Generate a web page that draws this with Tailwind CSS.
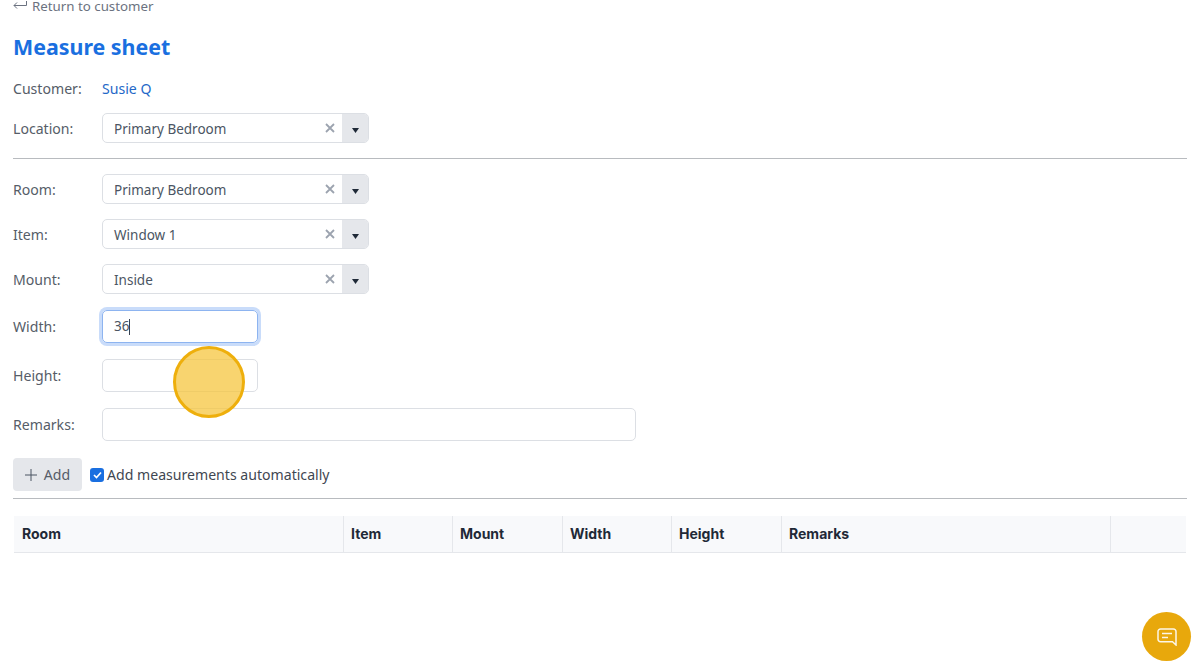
<!DOCTYPE html>
<html>
<head>
<meta charset="utf-8">
<script src="https://cdn.jsdelivr.net/npm/@tailwindcss/browser@4"></script>
</head>
<body class="bg-white overflow-hidden">
<div class="relative w-[1200px] h-[670px] overflow-hidden font-['Noto_Sans',sans-serif] text-[14.1px] text-[#565d68]">
  <div class="px-[13px] flex flex-col">
    <div class="h-[13px] flex items-center gap-[5px] text-[13.3px] text-[#6b7280]">
      <svg class="w-[14px] h-[12px]" viewBox="0 0 14 12" fill="none" stroke="#6b7280" stroke-width="1"><path d="M13.500 0v4.500H1M1 4.500l3-3M1 4.500l3 3"/></svg>
      <span>Return to customer</span>
    </div>
    <h1 class="mt-[18px] h-[32px] leading-[32px] text-[21.4px] font-bold text-[#1a6fe0]">Measure sheet</h1>
    <div class="mt-[14px] h-[24px] flex items-center">
      <span class="w-[89px]">Customer:</span><span class="text-[#2468c8]">Susie Q</span>
    </div>
    <div class="mt-[12px] h-[30px] flex items-center">
      <span class="w-[89px] mt-[2px]">Location:</span>
      <div class="w-[267px] h-[30px] flex rounded-[5px] border border-[#dcdfe4] overflow-hidden">
        <span class="flex-1 pl-[11px] leading-[30px] text-[13.5px] text-[#4b5563]">Primary Bedroom</span>
        <span class="w-[26px] pl-[2px] flex items-center justify-center"><svg class="w-[10px] h-[10px]" viewBox="0 0 10 10" stroke="#9ca3af" stroke-width="1.800"><path d="M1 1l8 8M9 1l-8 8"/></svg></span>
        <span class="w-[26px] bg-[#e5e7eb] flex items-center justify-center pt-[5px]"><svg class="w-[7px] h-[5px]" viewBox="0 0 7 5" fill="#1f2937"><path d="M0 0h7L3.500 5z"/></svg></span>
      </div>
    </div>
    <div class="mt-[15px] h-[1px] bg-[#b8bbbf]"></div>
    <div class="mt-[15px] h-[30px] flex items-center">
      <span class="w-[89px] mt-[2px]">Room:</span>
      <div class="w-[267px] h-[30px] flex rounded-[5px] border border-[#dcdfe4] overflow-hidden">
        <span class="flex-1 pl-[11px] leading-[30px] text-[13.5px] text-[#4b5563]">Primary Bedroom</span>
        <span class="w-[26px] pl-[2px] flex items-center justify-center"><svg class="w-[10px] h-[10px]" viewBox="0 0 10 10" stroke="#9ca3af" stroke-width="1.800"><path d="M1 1l8 8M9 1l-8 8"/></svg></span>
        <span class="w-[26px] bg-[#e5e7eb] flex items-center justify-center pt-[5px]"><svg class="w-[7px] h-[5px]" viewBox="0 0 7 5" fill="#1f2937"><path d="M0 0h7L3.500 5z"/></svg></span>
      </div>
    </div>
    <div class="mt-[15px] h-[30px] flex items-center">
      <span class="w-[89px] mt-[2px]">Item:</span>
      <div class="w-[267px] h-[30px] flex rounded-[5px] border border-[#dcdfe4] overflow-hidden">
        <span class="flex-1 pl-[11px] leading-[30px] text-[13.5px] text-[#4b5563]">Window 1</span>
        <span class="w-[26px] pl-[2px] flex items-center justify-center"><svg class="w-[10px] h-[10px]" viewBox="0 0 10 10" stroke="#9ca3af" stroke-width="1.800"><path d="M1 1l8 8M9 1l-8 8"/></svg></span>
        <span class="w-[26px] bg-[#e5e7eb] flex items-center justify-center pt-[5px]"><svg class="w-[7px] h-[5px]" viewBox="0 0 7 5" fill="#1f2937"><path d="M0 0h7L3.500 5z"/></svg></span>
      </div>
    </div>
    <div class="mt-[15px] h-[30px] flex items-center">
      <span class="w-[89px] mt-[2px]">Mount:</span>
      <div class="w-[267px] h-[30px] flex rounded-[5px] border border-[#dcdfe4] overflow-hidden">
        <span class="flex-1 pl-[11px] leading-[30px] text-[13.5px] text-[#4b5563]">Inside</span>
        <span class="w-[26px] pl-[2px] flex items-center justify-center"><svg class="w-[10px] h-[10px]" viewBox="0 0 10 10" stroke="#9ca3af" stroke-width="1.800"><path d="M1 1l8 8M9 1l-8 8"/></svg></span>
        <span class="w-[26px] bg-[#e5e7eb] flex items-center justify-center pt-[5px]"><svg class="w-[7px] h-[5px]" viewBox="0 0 7 5" fill="#1f2937"><path d="M0 0h7L3.500 5z"/></svg></span>
      </div>
    </div>
    <div class="mt-[16px] h-[33px] flex items-center">
      <span class="w-[89px]">Width:</span>
      <div class="w-[156px] h-[33px] rounded-[5px] border border-[#8db4f0] ring-[3px] ring-[#c9dcfa] flex items-center pl-[11px] text-[13.5px] text-[#4b5563]">36<span class="w-[1px] h-[16px] bg-[#374151]"></span></div>
    </div>
    <div class="mt-[16px] h-[33px] flex items-center">
      <span class="w-[89px]">Height:</span>
      <div class="w-[156px] h-[33px] rounded-[5px] border border-[#dcdfe4]"></div>
    </div>
    <div class="mt-[16px] h-[33px] flex items-center">
      <span class="w-[89px]">Remarks:</span>
      <div class="w-[534px] h-[33px] rounded-[5px] border border-[#dcdfe4]"></div>
    </div>
    <div class="mt-[17px] h-[33px] flex items-center">
      <div class="w-[69px] h-[33px] rounded-[4px] bg-[#e5e7eb] flex items-center justify-center gap-[7px]">
        <svg class="w-[12px] h-[12px]" viewBox="0 0 12 12" stroke="#4b5563" stroke-width="1"><path d="M6 0v12M0 6h12"/></svg>
        <span>Add</span>
      </div>
      <span class="ml-[8px] w-[14px] h-[14px] rounded-[3px] bg-[#1a6fe0] flex items-center justify-center"><svg class="w-[9px] h-[8px]" viewBox="0 0 9 8" fill="none" stroke="#fff" stroke-width="1.700"><path d="M1 4l2.500 2.500L8 1.500"/></svg></span>
      <span class="ml-[3px] text-[#3f4752]">Add measurements automatically</span>
    </div>
    <div class="mt-[7px] h-[1px] bg-[#b8bbbf]"></div>
    <div class="mt-[17px] ml-[1px] mr-[1px] h-[37px] bg-[#f8f9fb] border-b border-[#e5e7eb] flex font-['Inter',sans-serif] font-bold text-[14px] leading-[35px] text-[#1f2937]">
      <div class="w-[330px] pl-[8px] border-r border-[#e5e7eb]">Room</div>
      <div class="w-[109px] pl-[7px] border-r border-[#e5e7eb]">Item</div>
      <div class="w-[110px] pl-[7px] border-r border-[#e5e7eb]">Mount</div>
      <div class="w-[109px] pl-[7px] border-r border-[#e5e7eb]">Width</div>
      <div class="w-[110px] pl-[7px] border-r border-[#e5e7eb]">Height</div>
      <div class="w-[329px] pl-[7px] border-r border-[#e5e7eb]">Remarks</div>
      <div class="flex-1"></div>
    </div>
  </div>
  <div class="absolute left-[173px] top-[346px] w-[72px] h-[72px] rounded-full bg-[#f6c63f]/75 border-[3px] border-[#eeaf0c]"></div>
  <div class="absolute left-[1142px] top-[612px] w-[49px] h-[49px] rounded-full bg-[#e8a80c] flex items-center justify-center">
    <svg class="w-[20px] h-[18px]" viewBox="0 0 20 18" fill="none" stroke="#fff" stroke-width="1.500" opacity="0.9"><path d="M3.500 1h13A2.500 2.500 0 0 1 19 3.500V17l-3.500-3.200H3.500A2.500 2.500 0 0 1 1 11.300V3.500A2.500 2.500 0 0 1 3.500 1z"/><path d="M5 5.500h10M5 9.500h6"/></svg>
  </div>
</div>
</body>
</html>
